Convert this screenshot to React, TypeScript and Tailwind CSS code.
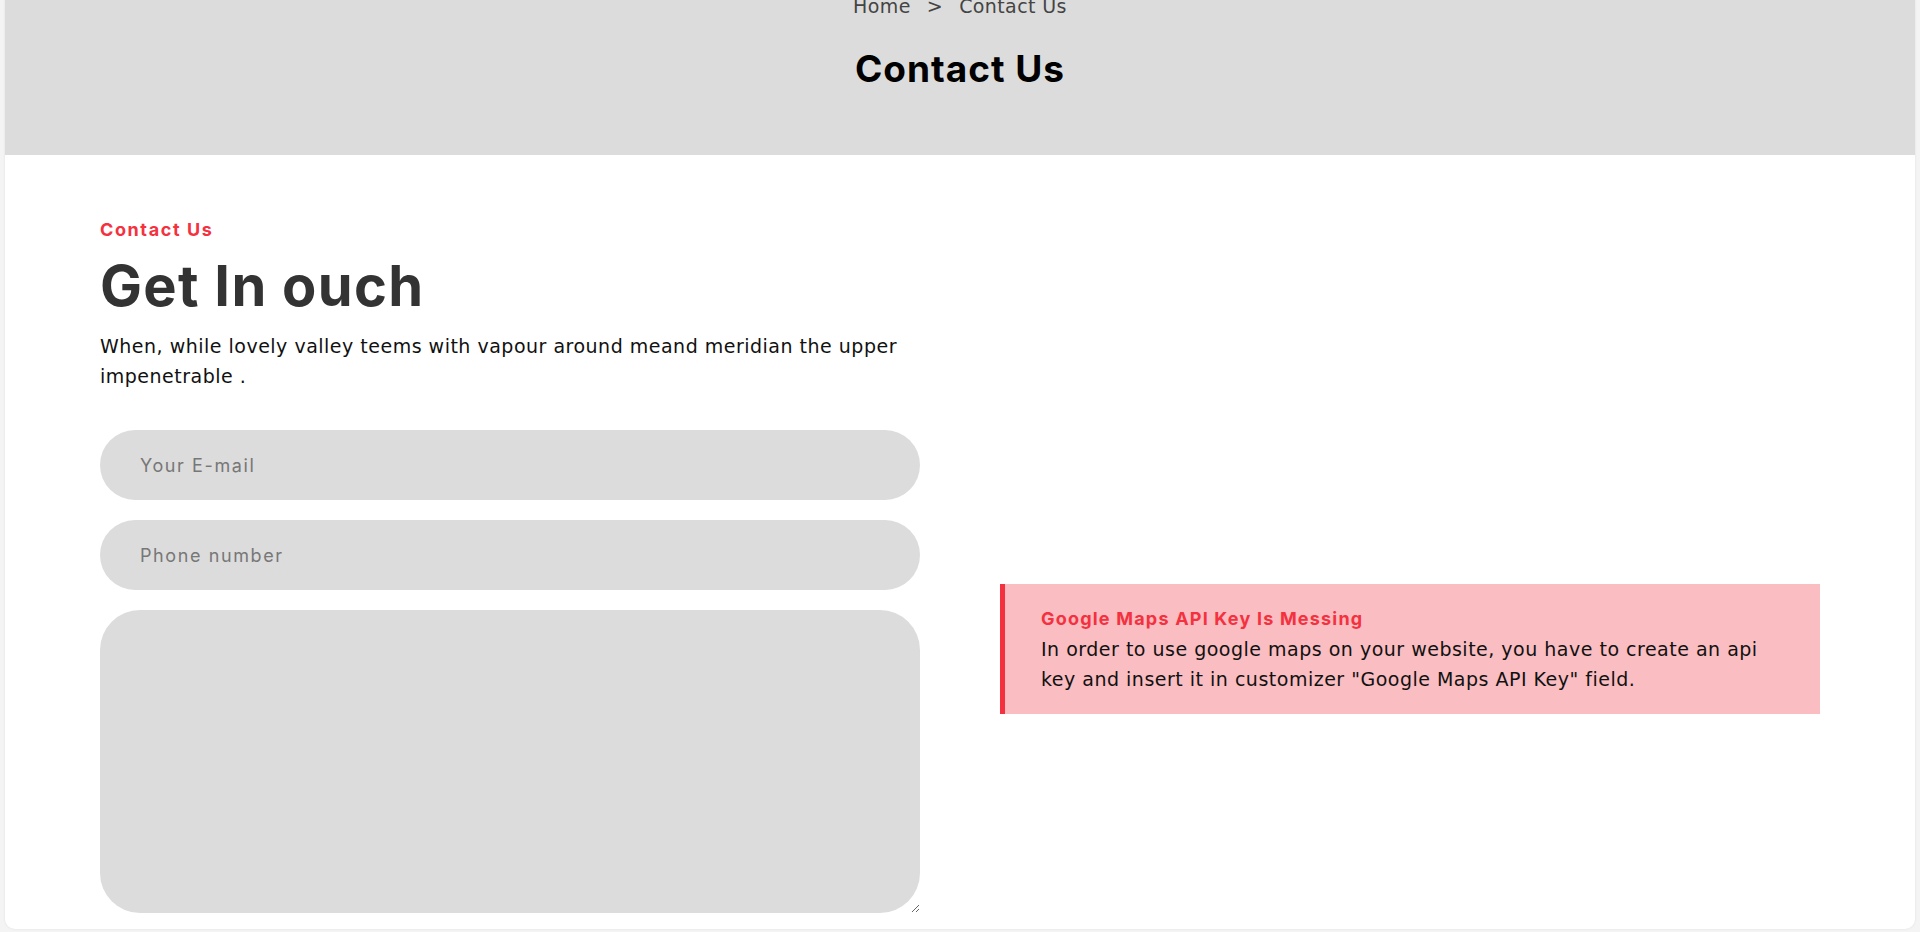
import { useState } from "react";

const heading = "font-['Inter','Noto_Sans',sans-serif]";
const body = "font-['DejaVu_Sans','Noto_Sans',sans-serif]";

function Field({ placeholder, type = "text" }: { placeholder: string; type?: string }) {
  const [value, setValue] = useState("");
  return (
    <input
      type={type}
      value={value}
      onChange={(e) => setValue(e.target.value)}
      placeholder={placeholder}
      className={`${heading} h-[70px] w-full rounded-[40px] bg-[#dcdcdc] px-10 text-[18px] tracking-[1.6px] text-[#333] outline-none placeholder:text-[#777]`}
    />
  );
}

export default function App() {
  const [message, setMessage] = useState("");

  return (
    <div className="h-[932px] overflow-hidden bg-[#f4f4f4] px-[5px]">
      <div className="-mt-[10px] rounded-[10px] bg-white shadow-[0_0_3px_rgba(0,0,0,0.08)]">
        {/* page header */}
        <header className="flex h-[165px] flex-col items-center rounded-t-[10px] bg-[#dcdcdc] pt-px">
          <nav className={`${body} flex items-center gap-4 text-[19px] leading-[30px] tracking-[0.4px] text-[#444]`}>
            <span>Home</span>
            <span>&gt;</span>
            <span>Contact Us</span>
          </nav>
          <h1 className={`${heading} mt-[26px] text-[37px] font-bold leading-[1.2] tracking-[1px] text-black`}>
            Contact Us
          </h1>
        </header>

        {/* contact section */}
        <section className="mx-auto grid w-[1720px] grid-cols-2 gap-[80px] pt-[61px] pb-[16px]">
          <div>
            <p className={`${heading} text-[18px] font-bold leading-[27px] tracking-[1.6px] text-[#f4313f]`}>Contact Us</p>
            <h2 className={`${heading} mt-[10px] text-[56px] font-bold leading-[1.2] tracking-[1.3px] text-[#333]`}>
              Get In ouch
            </h2>
            <p className={`${body} mt-[11px] text-[19px] leading-[30px] tracking-[0.5px] text-[#111]`}>
              When, while lovely valley teems with vapour around meand meridian the upper impenetrable .
            </p>

            <form className="mt-[39px] flex flex-col gap-5" onSubmit={(e) => e.preventDefault()}>
              <Field placeholder="Your E-mail" type="email" />
              <Field placeholder="Phone number" />
              <textarea
                value={message}
                onChange={(e) => setMessage(e.target.value)}
                className={`${heading} h-[303px] w-full rounded-[40px] bg-[#dcdcdc] px-10 py-6 text-[18px] text-[#333] outline-none`}
              />
            </form>
          </div>

          <div className="pt-[368px]">
            <div className="border-l-[5px] border-[#f4313f] bg-[#fabdc1] py-5 pr-10 pl-[36px]">
              <p className={`${heading} text-[18px] font-bold leading-[30px] tracking-[1.2px] text-[#f4313f]`}>
                Google Maps API Key Is Messing
              </p>
              <p className={`${body} text-[19px] leading-[30px] tracking-[0.5px] text-[#111]`}>
                In order to use google maps on your website, you have to create an api key and insert it in customizer
                "Google Maps API Key" field.
              </p>
            </div>
          </div>
        </section>
      </div>
    </div>
  );
}
